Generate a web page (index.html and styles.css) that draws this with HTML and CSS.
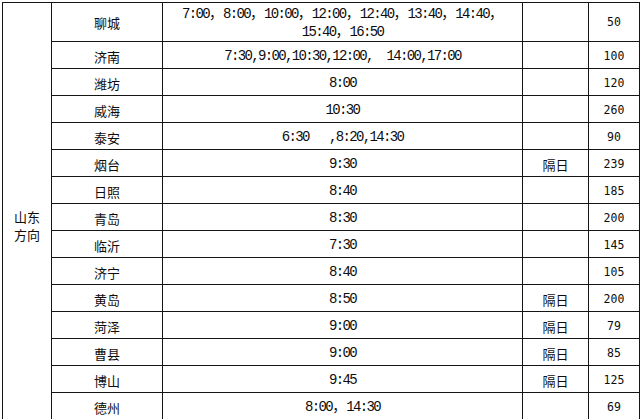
FILE: index.html
```html
<!DOCTYPE html>
<html lang="zh-CN">
<head>
<meta charset="utf-8">
<title>山东方向班次</title>
<link rel="stylesheet" href="styles.css">
</head>
<body>
<div class="page">
<table class="schedule">
<colgroup>
<col class="c-region"><col class="c-city"><col class="c-time"><col class="c-note"><col class="c-dist">
</colgroup>
<tbody>
<tr class="tall">
<td class="region" rowspan="15">山东<br>方向</td>
<td class="city">聊城</td>
<td class="time">7:00<span class="fc">，</span>8:00<span class="fc">，</span>10:00<span class="fc">，</span>12:00<span class="fc">，</span>12:40<span class="fc">，</span>13:40<span class="fc">，</span>14:40<span class="fc">，</span><br>15:40<span class="fc">，</span>16:50</td>
<td class="note"></td>
<td class="dist">50</td>
</tr>
<tr><td class="city">济南</td><td class="time">7:30,9:00,10:30,12:00,&nbsp; 14:00,17:00</td><td class="note"></td><td class="dist">100</td></tr>
<tr><td class="city">潍坊</td><td class="time">8:00</td><td class="note"></td><td class="dist">120</td></tr>
<tr><td class="city">威海</td><td class="time">10:30</td><td class="note"></td><td class="dist">260</td></tr>
<tr><td class="city">泰安</td><td class="time">6:30&nbsp;&nbsp; ,8:20,14:30</td><td class="note"></td><td class="dist">90</td></tr>
<tr><td class="city">烟台</td><td class="time">9:30</td><td class="note">隔日</td><td class="dist">239</td></tr>
<tr><td class="city">日照</td><td class="time">8:40</td><td class="note"></td><td class="dist">185</td></tr>
<tr><td class="city">青岛</td><td class="time">8:30</td><td class="note"></td><td class="dist">200</td></tr>
<tr><td class="city">临沂</td><td class="time">7:30</td><td class="note"></td><td class="dist">145</td></tr>
<tr><td class="city">济宁</td><td class="time">8:40</td><td class="note"></td><td class="dist">105</td></tr>
<tr><td class="city">黄岛</td><td class="time">8:50</td><td class="note">隔日</td><td class="dist">200</td></tr>
<tr><td class="city">菏泽</td><td class="time">9:00</td><td class="note">隔日</td><td class="dist">79</td></tr>
<tr><td class="city">曹县</td><td class="time">9:00</td><td class="note">隔日</td><td class="dist">85</td></tr>
<tr><td class="city">博山</td><td class="time">9:45</td><td class="note">隔日</td><td class="dist">125</td></tr>
<tr><td class="city">德州</td><td class="time">8:00<span class="fc">，</span>14:30</td><td class="note"></td><td class="dist">69</td></tr>
</tbody>
</table>
</div>
</body>
</html>
```

FILE: styles.css
```css
html, body {
  margin: 0;
  padding: 0;
  background: #ffffff;
}

.page {
  padding: 2px 0 0 2px;
}

.schedule {
  border-collapse: collapse;
  table-layout: fixed;
  width: 637px;
  color: #0d0d0d;
  font-family: "Noto Sans CJK SC", "Noto Sans", sans-serif;
  font-size: 13px;
}

.c-region { width: 49px; }
.c-city { width: 111px; }
.c-time { width: 360px; }
.c-note { width: 66px; }
.c-dist { width: 51px; }

.schedule tr {
  height: 27px;
}

.schedule tr.tall {
  height: 39px;
}

.schedule td {
  border: 1px solid #151515;
  padding: 3px 0 0;
  text-align: center;
  vertical-align: middle;
  line-height: 17px;
  white-space: nowrap;
}

.schedule tr.tall td {
  padding-top: 1px;
}

.schedule tr.tall td.region {
  padding-top: 205px;
  vertical-align: top;
  line-height: 18px;
}

.schedule td.time {
  font-family: "Liberation Mono", "Noto Sans CJK SC", monospace;
  font-size: 14px;
  letter-spacing: -1.65px;
  line-height: 17px;
}

.schedule tr.tall td.time {
  line-height: 18px;
}

.schedule td.time .fc {
  font-family: "Noto Sans CJK SC", sans-serif;
  letter-spacing: 0;
  line-height: 0;
}

.schedule td.dist {
  font-family: "DejaVu Sans Mono", monospace;
  font-size: 11.5px;
}
```
